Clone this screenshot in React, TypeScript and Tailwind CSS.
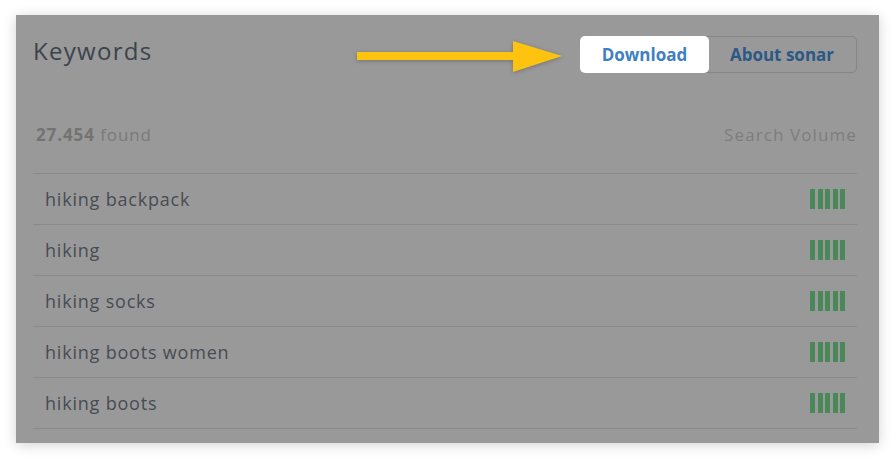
import React from 'react';

const keywords = ['hiking backpack', 'hiking', 'hiking socks', 'hiking boots women', 'hiking boots'];

const VolumeBars: React.FC = () => (
  <div className="flex gap-[2.5px]">
    {[0, 1, 2, 3, 4].map((i) => (
      <span key={i} className="block h-[20px] w-[5px] bg-[#4a8759]" />
    ))}
  </div>
);

const Arrow: React.FC = () => (
  <svg
    className="pointer-events-none absolute left-[341px] top-[26px] drop-shadow-[0_1px_2px_rgba(0,0,0,0.25)]"
    width="210"
    height="32"
    viewBox="0 0 210 32"
    aria-hidden="true"
  >
    <rect x="0" y="11" width="160" height="8" fill="#fdc30f" />
    <polygon points="156,0 205,15 156,31" fill="#fdc30f" />
  </svg>
);

export default function App() {
  return (
    <div className="h-[459px] w-[894px] bg-white pl-[16px] pt-[15px] font-['Open_Sans',sans-serif]">
      <div className="relative flex h-[428px] w-[863px] flex-col bg-[#999999] pl-[17px] pr-[22px] shadow-[0_2px_12px_rgba(0,0,0,0.18)]">
        <Arrow />

        <div className="mt-[21px] flex h-[37px] items-start justify-between">
          <h2 className="-mt-[2px] text-[24px] leading-[34px] tracking-[1.3px] text-[#3b434c]">Keywords</h2>
          <div className="flex h-[37px] rounded-[5px] border border-[#868686]">
            <button
              type="button"
              className="-m-px h-[37px] w-[129px] rounded-[5px] bg-white text-[17px] font-bold text-[#3f7fc4]"
            >
              Download
            </button>
            <button
              type="button"
              className="h-[35px] w-[148px] text-[17px] font-bold text-[#2c5886]"
            >
              About sonar
            </button>
          </div>
        </div>

        <div className="flex h-[100px] items-end justify-between pb-[26px] text-[17px] leading-[24px] tracking-[0.9px]">
          <span className="pl-[3px] text-[#7a7a7a]">
            <b className="font-bold text-[#737373]">27.454</b> found
          </span>
          <span className="tracking-[1.1px] text-[#7d7d7d]">Search Volume</span>
        </div>

        <ul className="border-b border-[#8a8a8a]">
          {keywords.map((kw) => (
            <li
              key={kw}
              className="flex h-[51px] items-center justify-between border-t border-[#8a8a8a] pl-[12px] pr-[12px]"
            >
              <span className="text-[18px] tracking-[0.8px] text-[#474c53]">{kw}</span>
              <VolumeBars />
            </li>
          ))}
        </ul>
      </div>
    </div>
  );
}
